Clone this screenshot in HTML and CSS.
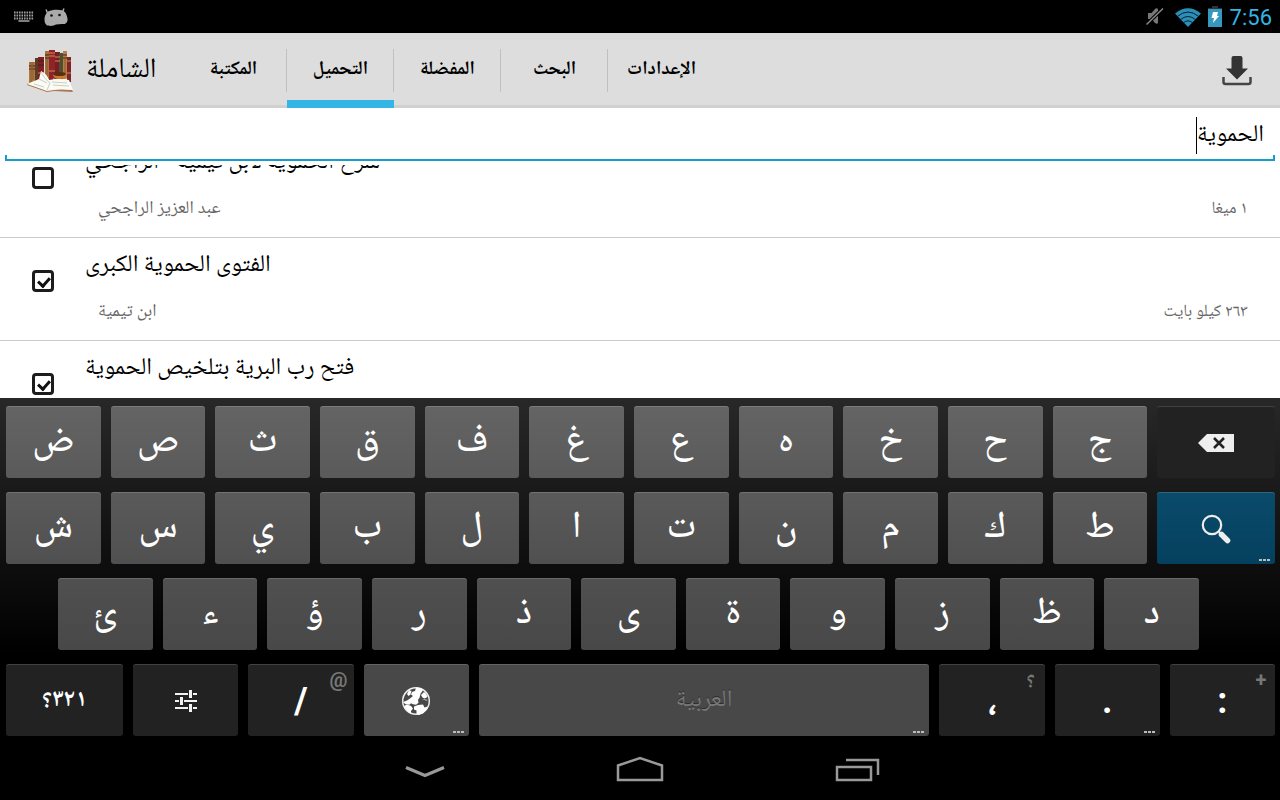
FILE: index.html
```html
<!DOCTYPE html>
<html lang="ar">
  <head>
    <meta charset="utf-8">
    <meta name="viewport" content="width=device-width, initial-scale=1">
    <title>الشاملة</title>
    <link rel="stylesheet" href="styles.css">
  </head>
  <body>
    <div class="status-bar">
      <svg class="status-kb" width="20" height="11" viewBox="0 0 20 11">
        <path d="M0 1.5h20M0 4.5h20M0 7.5h20" stroke="#a0a0a0" stroke-width="2" stroke-dasharray="1.6 0.9"/>
        <path d="M4.500 10h11" stroke="#a0a0a0" stroke-width="1.600"/>
      </svg>
      <svg width="24" height="18" viewBox="0 0 24 18">
        <path d="M3.500 5L2 1.500M18.500 4L20 0.500" stroke="#aaa" stroke-width="1.500"/>
        <path d="M4 3.500C8 1.500 14 1 19 2.500c3 1.500 5 7 4.500 10-.6 3-3 4-5.500 3.500-2 0-4 .3-6 .5-2 1.500-7 2-9.500.5C-.5 14.500-.3 7 4 3.500z" fill="#aaa"/>
        <circle cx="7.500" cy="7.500" r="1.300" fill="#111"/>
        <circle cx="15.500" cy="7" r="1.300" fill="#111"/>
      </svg>
      <span class="grow"></span>
      <svg width="18" height="19" viewBox="0 0 18 19">
        <path d="M2 6h3.500L9 2c1.500-1.300 3-.8 3 1v12c0 2-1.500 2.300-3 1l-3.500-4H2z" fill="#777"/>
        <path d="M0.500 17.500L17 1.500" stroke="#000" stroke-width="3.500"/>
        <path d="M0.500 17.500L17 1.500" stroke="#888" stroke-width="1.500"/>
      </svg>
      <svg class="status-wifi" width="28" height="20" viewBox="0 0 28 20">
        <path d="M1 6.500Q14-4 27 6.500L14 20z" fill="#2b8fba"/>
        <path d="M3.500 9.300Q14 .8 24.500 9.300M6.500 12.500Q14 6.500 21.500 12.500M9.500 15.700Q14 12 18.500 15.700" fill="none" stroke="#06202b" stroke-width="1"/>
      </svg>
      <svg width="14" height="21" viewBox="0 0 14 21">
        <path d="M4 0h6v2h4v2H0V2h4z" fill="#333"/>
        <path d="M0 3h14v18H0z" fill="#3498bf"/>
        <path d="M5 6h5l-1 4h2l-6 7 1-5H3.500z" fill="#fff"/>
      </svg>
      <span class="clock">7:56</span>
    </div>

    <header class="action-bar">
      <svg class="logo" width="48" height="44" viewBox="0 0 48 44">
        <path d="M3 13h6v22H3z" fill="#b07740"/>
        <path d="M9 9h5v25H9z" fill="#5b3a26"/>
        <path d="M12 8h6v25h-6z" fill="#7d1f24"/>
        <path d="M19 2h8v28h-8z" fill="#a8703c"/>
        <path d="M23 1h6v32h-6z" fill="#8e2429"/>
        <path d="M29 3h5v28h-5z" fill="#7a1d22"/>
        <path d="M33 4h4v27h-4z" fill="#4d5030"/>
        <path d="M37 2h4v28h-4z" fill="#b87d45"/>
        <path d="M41 8h4v25h-4z" fill="#7d2426"/>
        <path d="M3 17h6M3 20h6M12 12h6M12 16h6M19 6h4M19 9h4M37 6h4M37 9h4" stroke="#3c2418" stroke-width="1"/>
        <path d="M23 4h6M23 7h6M23 22h6M29 8h5M29 12h5M41 12h4M41 24h4M12 24h6" stroke="#d08d55" stroke-width="1"/>
        <path d="M5 13v20M7 13v18M21 10v18M39 10v14" stroke="#8a5a2e" stroke-width="1"/>
        <path d="M27 25c0 7 13 7 13 0z" fill="#c77a2c"/>
        <ellipse cx="33.500" cy="25" rx="6.500" ry="2" fill="#5d2c10"/>
        <path d="M27 30q7 3 14 0" fill="none" stroke="#eee" stroke-width="1"/>
        <path d="M1 36l20 7 7-1 19 1-1-2-17-2-8 1L2 34z" fill="#a97850"/>
        <path d="M1 35l12-5 2-8q6 3 8 9 10-2 20 0l4 10q-14-1-19 0l-7 1Q10 38 1 35z" fill="#fbfbf5"/>
        <path d="M15 23q4 8 9 11l-3 7M13 30l8 4M26 33l15 1M27 36l16 1M8 35l10 3" fill="none" stroke="#bfc0b5" stroke-width=".8"/>
      </svg>
      <h1 class="app-title">الشاملة</h1>
      <nav class="tabs">
        <a class="tab" href="#library">المكتبة</a>
        <a class="tab active" href="#download">التحميل</a>
        <a class="tab" href="#favorites">المفضلة</a>
        <a class="tab" href="#search">البحث</a>
        <a class="tab" href="#settings">الإعدادات</a>
      </nav>
      <button class="download" type="button" aria-label="تحميل">
        <svg width="30" height="30" viewBox="0 0 30 30">
          <path d="M9.500 2q0-2 2-2h7q2 0 2 2v10.500H26L15 23.500 4 12.500h5.500z" fill="#333"/>
          <path d="M1.500 21v5q0 2 2 2h23q2 0 2-2v-5" fill="none" stroke="#444" stroke-width="2.500"/>
        </svg>
      </button>
    </header>

    <div class="search">
      <input class="search-input" type="text" dir="rtl" value="الحموية" aria-label="بحث">
      <span class="caret"></span>
    </div>

    <ul class="books">
      <li class="book">
        <input class="check" type="checkbox" id="book1">
        <div class="book-text">
          <label class="book-title" for="book1">شرح الحموية لابن تيمية - الراجحي</label>
          <div class="book-info">
            <span>عبد العزيز الراجحي</span>
            <span class="size" dir="rtl">١ ميغا</span>
          </div>
        </div>
      </li>
      <li class="book">
        <input class="check" type="checkbox" id="book2" checked>
        <div class="book-text">
          <label class="book-title" for="book2">الفتوى الحموية الكبرى</label>
          <div class="book-info">
            <span>ابن تيمية</span>
            <span class="size" dir="rtl">٢٦٣ كيلو بايت</span>
          </div>
        </div>
      </li>
      <li class="book">
        <input class="check" type="checkbox" id="book3" checked>
        <div class="book-text">
          <label class="book-title" for="book3">فتح رب البرية بتلخيص الحموية</label>
        </div>
      </li>
    </ul>

    <div class="keyboard">
      <div class="key-row light1">
        <button class="key">ض</button>
        <button class="key">ص</button>
        <button class="key">ث</button>
        <button class="key">ق</button>
        <button class="key">ف</button>
        <button class="key">غ</button>
        <button class="key">ع</button>
        <button class="key">ە</button>
        <button class="key">خ</button>
        <button class="key">ح</button>
        <button class="key">ج</button>
        <button class="key dark wide" aria-label="حذف">
          <svg width="36" height="18" viewBox="0 0 36 18">
            <path d="M0 9l9-9h27v18H9z" fill="#eee"/>
            <path d="M16 4l10 10M26 4L16 14" stroke="#222" stroke-width="2.500"/>
          </svg>
        </button>
      </div>
      <div class="key-row light2">
        <button class="key">ش</button>
        <button class="key">س</button>
        <button class="key">ي</button>
        <button class="key">ب</button>
        <button class="key">ل</button>
        <button class="key">ا</button>
        <button class="key">ت</button>
        <button class="key">ن</button>
        <button class="key">م</button>
        <button class="key">ك</button>
        <button class="key">ط</button>
        <button class="key blue wide more" aria-label="بحث">
          <svg width="30" height="30" viewBox="0 0 30 30">
            <circle cx="11" cy="11" r="9.200" fill="none" stroke="#eee" stroke-width="2.200"/>
            <path d="M17 17l3.500 3.500" stroke="#eee" stroke-width="2"/>
            <path d="M20.500 20.500l6 6" stroke="#eee" stroke-width="5.500" stroke-linecap="round"/>
          </svg>
        </button>
      </div>
      <div class="key-row light3 inset">
        <button class="key">ئ</button>
        <button class="key">ء</button>
        <button class="key">ؤ</button>
        <button class="key">ر</button>
        <button class="key">ذ</button>
        <button class="key">ى</button>
        <button class="key">ة</button>
        <button class="key">و</button>
        <button class="key">ز</button>
        <button class="key">ظ</button>
        <button class="key">د</button>
      </div>
      <div class="key-row light4">
        <button class="key dark wide symbols" dir="rtl">٣٢١؟</button>
        <button class="key dark mid" aria-label="إعدادات">
          <svg width="22" height="22" viewBox="0 0 22 22">
            <path d="M0 4h13M18 4h4M0 11h4M9 11h13M0 18h13M18 18h4" stroke="#f2f2f2" stroke-width="2"/>
            <path d="M15.500 0v8M6.500 7v8M15.500 14v8" stroke="#f2f2f2" stroke-width="3"/>
          </svg>
        </button>
        <button class="key dark mid latin">/<span class="hint">@</span></button>
        <button class="key mid more" aria-label="اللغة">
          <svg width="30" height="30" viewBox="0 0 30 30">
            <circle cx="15" cy="15" r="13.300" fill="none" stroke="#eee" stroke-width="1.500"/>
            <path d="M15 1.500l5 .8 2 2-2.500 3.500-1 4-1.500 2 .5 3-2.500 2-3-.5-2-1-1.500 1.500-4-.5L2 16l4-1.500 3-2 3-2.500-2-1.500 1-2.500 3-1z" fill="#fff"/>
            <path d="M8 4l2.500 1-1 3.500-2 1.500L6 8zM20 9l3-3 2 1.500 1.500 3.500-3 1.500-2-1zM21 13l4 1.500 2-.5" fill="#fff"/>
            <path d="M3 20l3-1.500 4 1.500 2 2.500-2 2.500v2.500Q5 25 3 20zM13 20.500l4-1.500 5-.5 1.500 3 3-1-1 3-3.500 4-4.500 1.500-2-1v-3.500l-2.500-1z" fill="#fff"/>
          </svg>
        </button>
        <button class="key space more">العربية</button>
        <button class="key dark mid latin">،<span class="hint">؟</span></button>
        <button class="key dark mid more latin">.</button>
        <button class="key dark mid latin">:<span class="hint">+</span></button>
      </div>
    </div>

    <div class="nav-bar">
      <button aria-label="إخفاء لوحة المفاتيح">
        <svg width="48" height="28" viewBox="0 0 48 28">
          <path d="M6 12.500l19 8 19-8" fill="none" stroke="#999" stroke-width="3"/>
        </svg>
      </button>
      <button aria-label="الرئيسية">
        <svg width="48" height="28" viewBox="0 0 48 28">
          <path d="M2 25V10.500L24 3l22 7.500V25z" fill="none" stroke="#999" stroke-width="2.500"/>
        </svg>
      </button>
      <button aria-label="التطبيقات الأخيرة">
        <svg width="48" height="28" viewBox="0 0 48 28">
          <path d="M5 12h34v13H5zM14 5h32v15" fill="none" stroke="#999" stroke-width="2.500"/>
        </svg>
      </button>
    </div>
  </body>
</html>
```
FILE: styles.css
```css
* {
	box-sizing: border-box;
}

body {
	margin: 0;
	height: 100vh;
	display: flex;
	flex-direction: column;
	overflow: hidden;
	background: #fff;
	color: #000;
	font-family: "Noto Naskh Arabic", "Droid Arabic Naskh", "Noto Sans Arabic", "DejaVu Sans", sans-serif;
}

button, input {
	font-family: inherit;
	margin: 0;
}

button {
	border: 0;
	padding: 0;
	background: none;
	cursor: pointer;
}

svg {
	display: block;
}

.grow {
	flex: 1;
}

/* status bar */
.status-bar {
	display: flex;
	flex: none;
	align-items: center;
	height: 33px;
	padding: 0 8px 0 14px;
	gap: 10px;
	background: #000;
}

.status-bar .status-wifi {
	margin-right: -4px;
}

.clock {
	color: #33b5e5;
	font-family: Roboto, sans-serif;
	font-size: 22px;
	line-height: 36px;
	margin-left: -2px;
	padding-top: 2px;
}

/* action bar */
.action-bar {
	display: flex;
	flex: none;
	height: 75px;
	padding: 0 28px 0 26px;
	background: #ddd;
	box-shadow: inset 0 -3px #d0d0d0;
}

.logo {
	align-self: center;
}

.app-title {
	width: 94px;
	margin: 0;
	padding: 0 12px;
	font-size: 28px;
	font-weight: normal;
	line-height: 76px;
	white-space: nowrap;
}

.tabs {
	display: flex;
	flex: 1;
	margin-left: 12px;
}

.tab {
	position: relative;
	width: 107px;
	color: #000;
	font-size: 19px;
	font-weight: bold;
	line-height: 74px;
	text-align: center;
	text-decoration: none;
}

.tab + .tab::before {
	content: "";
	position: absolute;
	left: -1px;
	top: 16px;
	height: 43px;
	border-left: 1px solid #c0c0c0;
}

.tab.active {
	box-shadow: inset 0 -8px #33b5e5;
}

/* search box */
.search {
	position: relative;
	flex: none;
	height: 57px;
	padding: 0 5px 4px;
}

.search-input {
	width: 100%;
	height: 53px;
	border: 0;
	padding: 2px 11px 0;
	outline: 0;
	font-size: 24px;
	background:
		linear-gradient(#1a9ccb, #1a9ccb) left bottom / 2px 6px no-repeat,
		linear-gradient(#1a9ccb, #1a9ccb) right bottom / 2px 6px no-repeat,
		linear-gradient(#1a9ccb, #1a9ccb) left bottom / 100% 2px no-repeat;
}

.caret {
	position: absolute;
	right: 83px;
	top: 9px;
	height: 37px;
	border-left: 1px solid #000;
}

/* results, scrolled part way into the first row */
.books {
	flex: 1;
	min-height: 0;
	margin: 0;
	padding: 0;
	overflow: hidden;
	list-style: none;
}

.book {
	display: flex;
	height: 103px;
	padding: 0 32px;
	border-bottom: 1px solid #ccc;
}

.book:first-child {
	margin-top: -30px;
}

.check {
	appearance: none;
	position: relative;
	width: 22px;
	height: 22px;
	margin: 32px 31px 0 0;
	border: 3px solid #1c1c1c;
	border-radius: 4px;
}

.check:checked::after {
	content: "";
	position: absolute;
	left: 5px;
	top: 2px;
	width: 5px;
	height: 9px;
	border: solid #111;
	border-width: 0 3px 3px 0;
	transform: rotate(42deg);
}

.book-text {
	flex: 1;
}

.book-title {
	display: block;
	font-size: 24px;
	line-height: 56px;
}

.book-info {
	display: flex;
	justify-content: space-between;
	padding-left: 13px;
	color: #666;
	font-size: 18px;
	line-height: 36px;
}

.size {
	font-size: 17px;
	line-height: 38px;
}

/* keyboard */
.keyboard {
	display: flex;
	flex: none;
	flex-direction: column;
	gap: 14px;
	padding: 8px 5px 4px 6px;
	background: linear-gradient(#282828, #000 75%);
}

.key-row {
	display: flex;
	gap: 10px;
	height: 72px;
}

.key-row.inset {
	padding: 0 76px 0 52px;
}

.key {
	position: relative;
	display: flex;
	flex: 94 1 0;
	align-items: center;
	justify-content: center;
	border-radius: 3px;
	box-shadow: inset 0 1px rgba(255, 255, 255, 0.15);
	color: #fff;
	font-size: 38px;
	font-weight: 500;
	line-height: 72px;
	padding-top: 2px;
}

.light1 .key { background: linear-gradient(#646464, #5a5a5a); }
.light2 .key { background: linear-gradient(#5a5a5a, #505050); }
.light3 .key { background: linear-gradient(#505050, #484848); }
.light4 .key { background: #484848; }

.key-row .dark {
	background: #222;
}

.key-row .blue {
	background: linear-gradient(#0a4a6a, #05415f);
}

.wide {
	flex: 117 1 0;
}

.mid {
	flex: 105 1 0;
}

.space {
	flex: 450 1 0;
	color: #777;
	font-size: 24px;
	font-weight: normal;
	text-shadow: 0 -1px #2c2c2c;
}

.symbols {
	font-size: 24px;
	font-weight: bold;
}

.latin {
	font-family: Roboto, "Noto Naskh Arabic", "DejaVu Sans", sans-serif;
	font-size: 36px;
	font-weight: bold;
}

.more::after {
	content: "";
	position: absolute;
	right: 5px;
	bottom: 3px;
	width: 11px;
	height: 2px;
	background: repeating-linear-gradient(90deg, #bbb 0 3px, transparent 3px 4px);
}

.hint {
	position: absolute;
	right: 6px;
	top: 4px;
	min-width: 16px;
	color: #777;
	font-size: 20px;
	line-height: 24px;
	text-align: center;
}

/* navigation bar */
.nav-bar {
	display: flex;
	flex: none;
	justify-content: center;
	gap: 168px;
	height: 60px;
	padding-bottom: 2px;
	background: #000;
}
```
